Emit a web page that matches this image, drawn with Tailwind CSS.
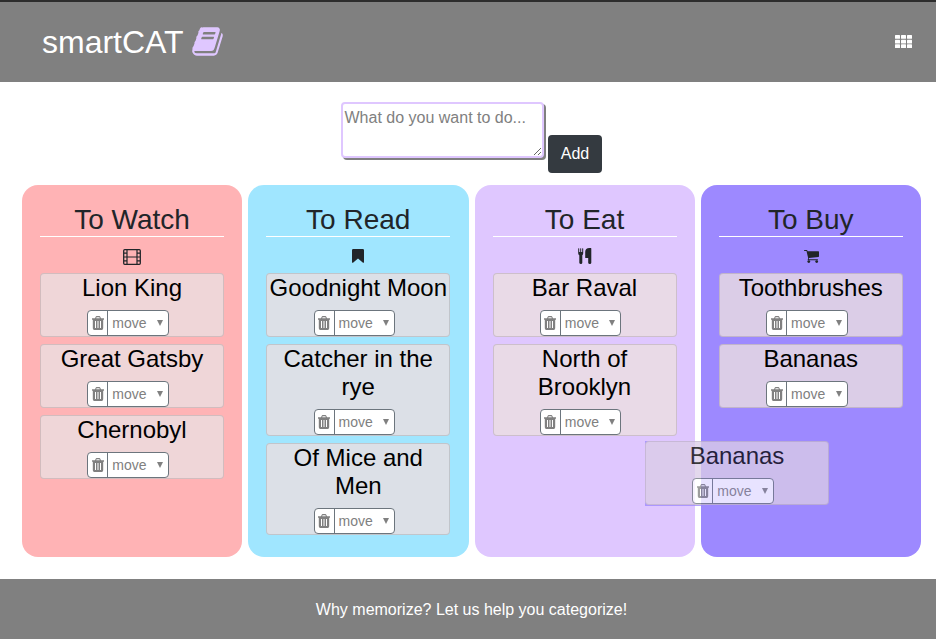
<!DOCTYPE html>
<html lang="en">
<head>
<meta charset="utf-8">
<title>smartCAT</title>
<script src="https://cdn.jsdelivr.net/npm/@tailwindcss/browser@4"></script>
</head>
<body class="relative flex h-[639px] w-[936px] flex-col overflow-hidden bg-white font-['Liberation_Sans',Arial,sans-serif] text-[#212529]">
<svg class="hidden">
  <symbol id="trash" viewBox="0 0 12 14"><path fill="currentColor" fill-rule="evenodd" d="M0 2.200H3L3.600 .9Q3.900 .1 4.700 .1H7.300Q8.100 .1 8.400 .9L9 2.200H12V3.700H11.200V12.300Q11.200 14 9.700 14H2.300Q.8 14 .8 12.300V3.700H0ZM4.200 2.200H7.800L7.400 1.200H4.600ZM3 5V12H4V5ZM5.500 5V12H6.500V5ZM8 5V12H9V5Z"/></symbol>
</svg>
<header class="flex h-[82px] shrink-0 items-center justify-between border-t-2 border-[#2d2d2d] bg-[#808080] pr-[24px] pl-[42px]">
  <div class="flex items-center">
    <h1 class="text-[32px] leading-[38px] text-white">smartCAT</h1>
    <svg class="mb-[2px] ml-[7px] h-[33px] w-[33px] text-[#dfc7ff]" viewBox="0 0 1792 1792"><path fill="currentColor" d="M1703 478q40 57 18 129l-275 906q-19 64-76.500 107.500t-122.500 43.500h-923q-77 0-148.500-53.500t-99.500-131.500q-24-67-2-127 0-4 3-27t4-37q1-8-3-21.500t-3-19.500q2-11 8-21t16.500-23.500 16.500-23.500q23-38 45-91.500t30-91.500q3-10 .5-30t-.5-28q3-11 17-28t17-23q21-36 42-92t25-90q1-9-2.500-32t.5-28q4-13 22-30.500t22-22.500q19-26 42.500-84.500t27.500-96.500q1-8-3-25.500t-2-26.500q2-8 9-18t18-23 17-21q8-12 16.500-30.500t15-35 16-36 19.500-32 26.500-23.500 36-11.500 47.500 5.500l-1 3q38-9 51-9h761q74 0 114 56t18 130l-274 906q-36 119-71.500 153.500t-128.500 34.500h-869q-27 0-38 15-11 16-1 43 24 70 144 70h923q29 0 56-15.500t35-41.500l300-987q7-22 5-57 38 15 59 43zm-1064 2q-4 13 2 22.500t20 9.500h608q13 0 25.500-9.500t16.500-22.500l21-64q4-13-2-22.500t-20-9.500h-608q-13 0-25.500 9.500t-16.500 22.500zm-83 256q-4 13 2 22.500t20 9.500h608q13 0 25.500-9.500t16.500-22.500l21-64q4-13-2-22.500t-20-9.500h-608q-13 0-25.500 9.500t-16.500 22.500z"/></svg>
  </div>
  <svg class="mb-[1px] h-[13px] w-[17px]" viewBox="0 0 17 13" fill="#fff"><rect width="5" height="3.800" rx=".5"/><rect x="6" width="5" height="3.800" rx=".5"/><rect x="12" width="5" height="3.800" rx=".5"/><rect y="4.700" width="5" height="3.700" rx=".5"/><rect x="6" y="4.700" width="5" height="3.700" rx=".5"/><rect x="12" y="4.700" width="5" height="3.700" rx=".5"/><rect y="9.200" width="5" height="3.800" rx=".5"/><rect x="6" y="9.200" width="5" height="3.800" rx=".5"/><rect x="12" y="9.200" width="5" height="3.800" rx=".5"/></svg>
</header>
<form class="flex h-[103px] shrink-0 items-start pt-[20px] pl-[341px]">
  <textarea class="h-[56px] w-[203px] resize rounded-[4px] border-2 border-[#dfc7ff] bg-white px-[1.500px] pt-[2px] text-[16px] leading-[24px] shadow-[2px_2px_0_#808080] outline-none placeholder:text-[#808080]" placeholder="What do you want to do..."></textarea>
  <button type="button" class="mt-[33px] ml-[4px] h-[38px] w-[54px] rounded-[4px] bg-[#343a40] text-[16px] text-white">Add</button>
</form>
<main class="mr-[15px] ml-[22px] grid h-[372px] shrink-0 grid-cols-4 gap-x-[6px]" id="board"></main>
<footer class="mt-[22px] flex h-[60px] shrink-0 items-center justify-center bg-[#808080] pt-[2px] pl-[7px] text-[16px] text-white">Why memorize? Let us help you categorize!</footer>
<div id="ghost" class="absolute top-[441px] left-[645px] h-[65px] w-[184px] bg-[#9d89ff] opacity-77"></div>
<script>
const columns = [
  ['To Watch', 'bg-[#ffb3b5]', ['Lion King', 'Great Gatsby', 'Chernobyl'],
   '<svg class="h-[16px] w-[18px]" viewBox="0 0 18 16" fill="none" stroke="currentColor"><rect x=".7" y=".7" width="16.600" height="14.600" rx="1" stroke-width="1.300"/><path stroke-width="1.200" d="M4 1V15M14 1V15M4 8H14M1 4.200H4M1 8H4M1 11.800H4M14 4.200H17M14 8H17M14 11.800H17"/></svg>'],
  ['To Read', 'bg-[#a0e6ff]', ['Goodnight Moon', 'Catcher in the rye', 'Of Mice and Men'],
   '<svg class="mb-[2px] h-[14px] w-[12px]" viewBox="0 0 12 14" fill="currentColor"><path d="M1.200 0H10.800Q12 0 12 1.200V12.900Q12 14 11 13.700L6 9.400 1 13.700Q0 14 0 12.900V1.200Q0 0 1.200 0Z"/></svg>'],
  ['To Eat', 'bg-[#dfc7ff]', ['Bar Raval', 'North of Brooklyn'],
   '<svg class="mb-[2px] h-[16px] w-[14px]" viewBox="0 0 14 16" fill="currentColor"><path d="M.2 .5Q.7 -.2 1.200 .5V4H2.200V.5Q2.700 -.2 3.200 .5V4H4.200V.5Q4.700 -.2 5.200 .5V5.200Q5.200 6.700 4.300 7.200V14.800Q4.300 16 2.900 16T1.300 14.800V7.200Q.2 6.700 .2 5.200ZM13.300 .5V14.800Q13.300 16 11.800 16T10.200 14.800V10H7.600Q7.200 10 7.200 9.500V4Q7.200 0 11.500 0H12.800Q13.300 0 13.300 .5Z"/></svg>'],
  ['To Buy', 'bg-[#9d89ff]', ['Toothbrushes', 'Bananas'],
   '<svg class="ml-[1px] h-[13px] w-[15px]" viewBox="0 0 15 13" fill="currentColor"><path d="M0 .5Q0 0 .6 0H2.700Q3.300 0 3.600 1.200H14.400Q15 1.200 15 1.800V6.300Q15 6.800 14.400 6.900L5 8 4.800 9.200H13.500Q14 9.200 14 9.700T13.500 10.300H4.200Q3.600 10.300 3.700 9.700L4.200 8.300 2.500 1.100H.6Q0 1.100 0 .5Z"/><circle cx="4.800" cy="11.600" r="1.400"/><circle cx="12.700" cy="11.600" r="1.400"/></svg>']
];
const card = t => `<article class="mb-[7px] flex w-[184px] flex-col items-center rounded-[4px] border border-black/12 bg-[#ebdfe1]/80 text-center text-black">
  <h3 class="w-full text-[24px] leading-[28px]">${t}</h3>
  <div class="mt-[8px] mr-[8px] flex h-[26px] w-[81.5px] overflow-hidden rounded-[4px] border border-[#6c757d] bg-white text-[#808080]">
    <button class="flex w-[20px] items-center justify-center border-r border-[#6c757d]"><svg class="mb-[1px] h-[14px] w-[12px]"><use href="#trash"/></svg></button>
    <button class="flex grow items-center justify-between pr-[5px] pl-[4px] text-[14px] leading-[20px]">move<svg class="h-[6px] w-[6px]" viewBox="0 0 6 6"><path fill="currentColor" d="M0 0H6L3 6Z"/></svg></button>
  </div></article>`;
document.getElementById('board').innerHTML = columns.map(([name, bg, items, icon]) =>
  `<section class="rounded-[16px] ${bg} px-[18px] pt-[18px]">
    <h2 class="h-[34px] w-[184px] border-b border-white text-center text-[28px] leading-[33px]">${name}</h2>
    <div class="flex h-[36px] w-[184px] items-center justify-center pt-[3px]">${icon}</div>
    ${items.map(card).join('')}
  </section>`).join('');
document.getElementById('ghost').innerHTML = card('Bananas').replace('mb-[7px] ', '');
</script>
</body>
</html>
